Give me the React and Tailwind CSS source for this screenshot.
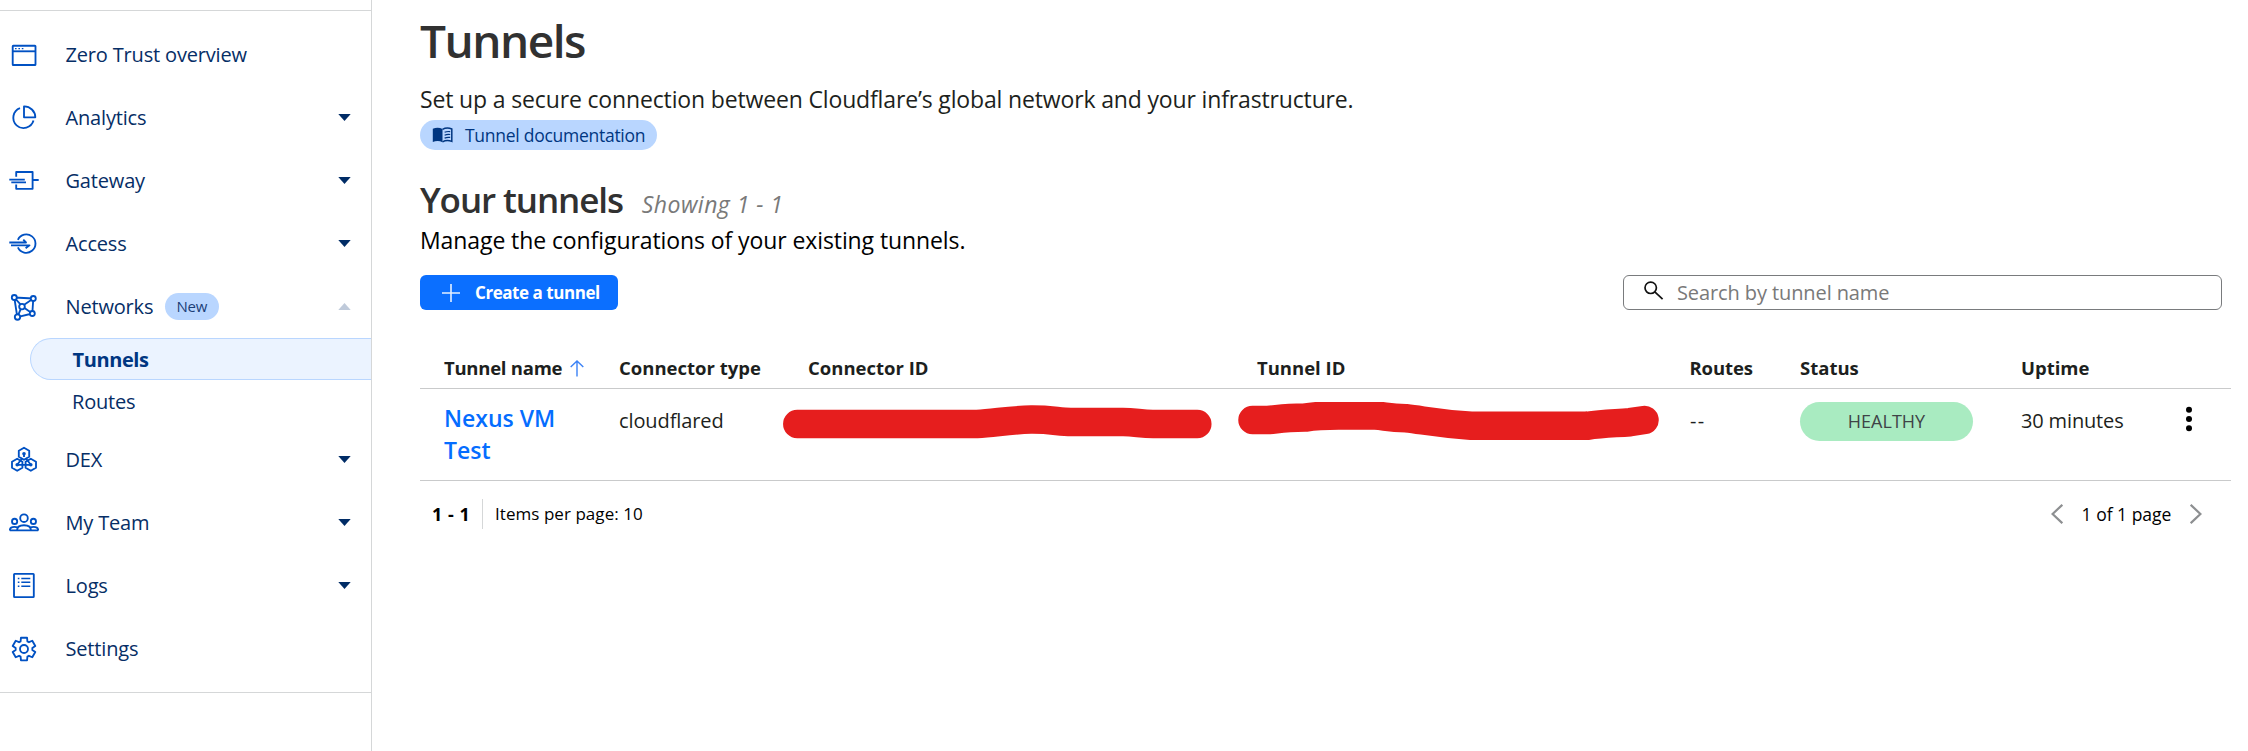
const gear = Array.from({ length: 6 }, (_, k) =>
  [
    [-24, 8.4],
    [-15, 11.7],
    [15, 11.7],
    [24, 8.4],
  ].map(([d, r]) => {
    const a = ((k * 60 + d - 90) * Math.PI) / 180;
    return `${(15 + r * Math.cos(a)).toFixed(2)},${(15 + r * Math.sin(a)).toFixed(2)}`;
  }).join(" ")
).join(" ");

const hex = (cx, cy, r) =>
  Array.from({ length: 6 }, (_, k) => {
    const a = ((k * 60 + 30) * Math.PI) / 180;
    return `${(cx + r * Math.cos(a)).toFixed(2)},${(cy + r * Math.sin(a)).toFixed(2)}`;
  }).join(" ");

const icons = {
  overview: (
    <>
      <rect x="3.7" y="5.7" width="22.8" height="19.3" rx="0.6" />
      <path d="M3.7 11.3H26.5" />
      <path d="M6 8.6h1.6M9.4 8.6H11M12.8 8.6h1.6" strokeWidth="1.4" />
    </>
  ),
  analytics: (
    <>
      <path d="M15 3.4V14.3H26.3A11 11 0 0 0 15 3.4Z" />
      <path d="M11 5.1A10.3 10.3 0 1 0 24.5 17.6" />
    </>
  ),
  gateway: (
    <path d="M7.2 10.8V6H23.6V22.8H7.2V18.6M24 14H29.7M.3 13.6H15.8M2.3 16.4H17" />
  ),
  access: (
    <>
      <path d="M8.9 10.8A9.2 9.2 0 1 1 8.9 18.4" />
      <path d="M.3 13.5H17L14.3 10.7M2 16.3H20.5L16.6 19.3" />
    </>
  ),
  networks: (
    <>
      <path d="M5.3 5.5L24.3 6.5L23.3 21.5L8.3 25.2ZM13 14.2L5.3 5.5M13 14.2L24.3 6.5M13 14.2L23.3 21.5M13 14.2L8.3 25.2" />
      <g fill="white">
        <circle cx="5.3" cy="5.5" r="2.5" />
        <circle cx="24.3" cy="6.5" r="2.5" />
        <circle cx="13" cy="14.6" r="2.8" />
        <circle cx="23.3" cy="21.5" r="2.5" />
        <circle cx="8.5" cy="25" r="2.7" />
      </g>
    </>
  ),
  dex: (
    <>
      <polygon points={hex(15, 8.8, 6)} />
      <polygon points={hex(8.2, 19.8, 6)} />
      <polygon points={hex(21.8, 19.8, 6)} />
      <path d="M15 8.8V12M13.4 13L8.2 19.8H21.8L16.6 13" />
      <g fill="currentColor" stroke="none">
        <circle cx="15" cy="8.8" r="1.8" />
        <circle cx="8.2" cy="19.8" r="1.8" />
        <circle cx="21.8" cy="19.8" r="1.8" />
      </g>
    </>
  ),
  team: (
    <>
      <circle cx="15" cy="10.2" r="3.8" />
      <circle cx="5.6" cy="13.4" r="2.6" />
      <circle cx="24.4" cy="13.4" r="2.6" />
      <path d="M.8 22.4H29.2M8 22.4C8 18.8 10.8 17.2 15 17.2S22 18.8 22 22.4M.8 22.4C.8 19.8 2.6 18.8 5.4 18.8 6.8 18.8 7.8 19 8.6 19.4M29.2 22.4C29.2 19.8 27.4 18.8 24.6 18.8 23.2 18.8 22.2 19 21.4 19.4" />
    </>
  ),
  logs: (
    <>
      <rect x="5" y="2.9" width="19.8" height="23.2" rx="0.6" />
      <path d="M12.3 7.5h9M12.3 11.3h9M12.3 15.2h9M8.8 7.5h1.6M8.8 11.3h1.6M8.8 15.2h1.6" strokeWidth="1.5" />
    </>
  ),
  settings: (
    <>
      <polygon points={gear} />
      <circle cx="15" cy="15" r="4" />
    </>
  ),
};

function NavItem({ icon, label, badge, caret }) {
  return (
    <div className="flex h-[63px] items-center pr-[20px] pl-[9px]">
      <svg
        viewBox="0 0 30 30"
        className="h-[30px] w-[30px] shrink-0 text-[#0051c3]"
        fill="none"
        stroke="currentColor"
        strokeWidth="1.85"
        strokeLinejoin="round"
      >
        {icons[icon]}
      </svg>
      <span className="ml-[26.5px] text-[20px] tracking-[-0.17px] whitespace-nowrap text-[#062e66]">{label}</span>
      {badge && (
        <span className="ml-[11.5px] flex h-[27px] w-[54px] items-center justify-center rounded-full bg-[#b9d6ff] text-[15px] tracking-[-0.2px] text-[#1c3f78]">
          {badge}
        </span>
      )}
      {caret && (
        <svg viewBox="0 0 13 7" className="ml-auto h-[7px] w-[13px]">
          {caret === "up" ? (
            <path d="M0.3 7L6.5 0L12.7 7Z" fill="#bfcada" />
          ) : (
            <path d="M0.3 0L6.5 7L12.7 0Z" fill="#002c66" />
          )}
        </svg>
      )}
    </div>
  );
}

function Sidebar() {
  return (
    <aside className="flex w-[372px] shrink-0 flex-col border-r border-[#d5d7d8] pt-[10px]">
      <nav className="flex flex-col border-y border-[#d5d7d8] pt-[12px] pb-[12px]">
        <NavItem icon="overview" label="Zero Trust overview" />
        <NavItem icon="analytics" label="Analytics" caret="down" />
        <NavItem icon="gateway" label="Gateway" caret="down" />
        <NavItem icon="access" label="Access" caret="down" />
        <NavItem icon="networks" label="Networks" badge="New" caret="up" />
        <div className="flex h-[90px] flex-col pl-[30px] text-[20px]">
          <div className="h-[42px] rounded-l-full border border-r-0 border-[#b9d6ff] bg-[#ebf3ff] pl-[41.5px] leading-[42px] font-bold tracking-[-0.4px] text-[#003681]">
            Tunnels
          </div>
          <div className="h-[42px] pl-[42px] leading-[44px] tracking-[-0.2px] text-[#062e66]">Routes</div>
        </div>
        <NavItem icon="dex" label="DEX" caret="down" />
        <NavItem icon="team" label="My Team" caret="down" />
        <NavItem icon="logs" label="Logs" caret="down" />
        <NavItem icon="settings" label="Settings" />
      </nav>
    </aside>
  );
}

const cols = "grid grid-cols-[175px_188px_450px_432px_111px_221px_1fr] pl-[24px]";

function TunnelTable() {
  return (
    <section className="mt-[37px]">
      <div className={`${cols} h-[42px] items-center border-b border-[#c9cacb] text-[18.5px] font-bold text-[#1d1f20]`}>
        <div className="flex items-center tracking-[-0.25px]">
          Tunnel name
          <svg viewBox="0 0 14 17" className="mt-[2px] ml-[8px] h-[17px] w-[14px]" fill="none" stroke="#3b82f6" strokeWidth="1.4">
            <path d="M7 16.5V1M0.7 7L7 1L13.3 7" />
          </svg>
        </div>
        <div>Connector type</div>
        <div className="pl-[1px]">Connector ID</div>
        <div>Tunnel ID</div>
        <div className="pl-[0.5px] tracking-[-0.1px]">Routes</div>
        <div>Status</div>
        <div>Uptime</div>
      </div>
      <div className={`${cols} h-[92px] items-start border-b border-[#c9cacb] pt-[13px] text-[20px] leading-[32px] text-[#1d1f20]`}>
        <div className="w-[120px] text-[23px] leading-[32px] font-semibold text-[#056dff]">Nexus VM Test</div>
        <div className="pt-[3px] tracking-[-0.1px]">cloudflared</div>
        <svg viewBox="0 0 430 42" className="-ml-[24px] h-[42px] w-[430px]" fill="none" stroke="#e61e1e" strokeWidth="28.5" strokeLinecap="round" strokeLinejoin="round">
          <path d="M14.3 22H194C212 21 228 17.8 248 17.6C268 17.4 276 20 288 20H340C352 20 358 22 370 22H414.3" />
        </svg>
        <svg viewBox="0 0 424 42" className="-ml-[19px] h-[42px] w-[424px]" fill="none" stroke="#e61e1e" strokeWidth="28.5" strokeLinecap="round" strokeLinejoin="round">
          <path d="M14.5 18H30C42 17 45 16 67 15.6C82 13 95 13.2 110 13.5H137C147 14 150 16 168 16.3C185 18 195 21 233 23.8H349C365 21.5 375 21.5 392 20.2Q400 19 406.5 18" />
        </svg>
        <div className="pt-[3px] pl-[1px] tracking-[1.2px]">--</div>
        <div className="flex h-[39px] w-[173px] items-center justify-center rounded-full bg-[#a9ebc1] pb-[1px] text-[18px] text-[#3f4347]">
          HEALTHY
        </div>
        <div className="flex items-start justify-between pt-[3px] pr-[38px] tracking-[-0.15px]">
          30 minutes
          <svg viewBox="0 0 8 26" className="mt-[1px] h-[26px] w-[8px]">
            <circle cx="4" cy="3.7" r="3" />
            <circle cx="4" cy="13" r="3" />
            <circle cx="4" cy="22.3" r="3" />
          </svg>
        </div>
      </div>
      <div className="mt-[18px] flex h-[30px] items-center pr-[29px] pl-[12px] text-[17px] text-black">
        <span className="w-[50px] text-[18px] font-bold tracking-[0.5px]">1 - 1</span>
        <span className="h-[30px] w-px bg-[#d5d7d8]" />
        <span className="ml-[12px] tracking-[0.05px]">Items per page: 10</span>
        <svg viewBox="0 0 12 20" className="ml-auto h-[20px] w-[12px]" fill="none" stroke="#8d8f91" strokeWidth="2.2">
          <path d="M11.3 0.8L1.6 10L11.3 19.2" />
        </svg>
        <span className="w-[127px] text-center text-[17.5px]">1 of 1 page</span>
        <svg viewBox="0 0 12 20" className="h-[20px] w-[12px]" fill="none" stroke="#8d8f91" strokeWidth="2.2">
          <path d="M0.7 0.8L10.4 10L0.7 19.2" />
        </svg>
      </div>
    </section>
  );
}

export default function App() {
  return (
    <div className="flex h-[751px] w-full bg-white font-['Open_Sans','Noto_Sans',sans-serif]">
      <Sidebar />
      <main className="flex-1 pt-[16px] pr-[17px] pl-[48px]">
        <h1 className="text-[46px] leading-[48px] font-semibold tracking-[-1.5px] text-[#313131]">Tunnels</h1>
        <p className="mt-[17px] text-[23px] leading-[36px] tracking-[-0.15px] text-[#1d1f20]">
          Set up a secure connection between Cloudflare’s global network and your infrastructure.
        </p>
        <a className="mt-[3px] flex h-[30px] w-[237px] items-center rounded-full bg-[#b9d6ff] pl-[12px] text-[17.5px] tracking-[-0.27px] text-[#003681]">
          <svg viewBox="0 0 21 16" className="h-[16px] w-[21px]">
            <path d="M0.8 1.8C4 0.4 7.5 0.4 10.5 2V15.2C7.5 13.6 4 13.6 0.8 15Z" fill="#003681" />
            <path d="M10.5 2.4C13.4 0.8 17 0.8 19.8 2V14.4C17 13.2 13.4 13.2 10.5 14.8" fill="none" stroke="#003681" strokeWidth="1.5" />
            <path d="M12.6 5.3C14.5 4.4 16 4.3 18.2 4.6M12.6 8.2C14.5 7.3 16 7.2 18.2 7.5M12.6 11.1C14.5 10.2 16 10.1 18.2 10.4" fill="none" stroke="#003681" strokeWidth="1.2" />
          </svg>
          <span className="ml-[12px]">Tunnel documentation</span>
        </a>
        <div className="mt-[27px] flex h-[45px] items-baseline">
          <h2 className="text-[35px] leading-[46px] font-semibold tracking-[-1.1px] text-[#313131]">Your tunnels</h2>
          <span className="ml-[19px] text-[23px] tracking-[0.45px] text-[#797979] italic">Showing 1 - 1</span>
        </div>
        <p className="text-[23px] leading-[36px] tracking-[-0.09px] text-black">
          Manage the configurations of your existing tunnels.
        </p>
        <div className="mt-[17px] flex h-[35px] items-center justify-between pr-[9px]">
          <button className="flex h-[35px] w-[198px] items-center rounded-[6px] bg-[#0b6fff] pl-[22px] text-[17px] font-bold tracking-[-0.45px] text-white">
            <svg viewBox="0 0 18 18" className="h-[18px] w-[18px]" fill="none" stroke="#e4efff" strokeWidth="1.6">
              <path d="M9 0V18M0 9H18" />
            </svg>
            <span className="ml-[15px] whitespace-nowrap">Create a tunnel</span>
          </button>
          <div className="flex h-[35px] w-[599px] items-center rounded-[6px] border border-[#797b7d] pl-[20px]">
            <svg viewBox="0 0 20 19" className="mb-[4px] h-[19px] w-[20px]" fill="none" stroke="#111111" strokeWidth="1.7">
              <circle cx="6.7" cy="6.8" r="5.7" />
              <path d="M10.8 10.8L18.6 18.2" />
            </svg>
            <span className="mt-[1px] ml-[13px] text-[20px] leading-[28px] tracking-[-0.1px] text-[#797979]">Search by tunnel name</span>
          </div>
        </div>
        <TunnelTable />
      </main>
    </div>
  );
}
